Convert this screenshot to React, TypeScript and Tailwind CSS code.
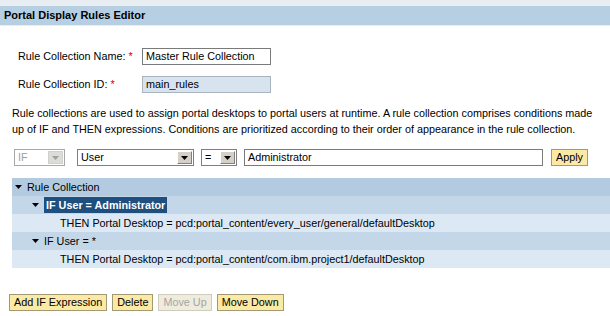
import React from "react";

function Arrow({ color = "#000" }: { color?: string }) {
  return (
    <svg width="7" height="4" viewBox="0 0 7 4">
      <path d="M0 0 L7 0 L3.5 4 Z" fill={color} />
    </svg>
  );
}

function Select({ value, width, disabled }: { value: string; width: string; disabled?: boolean }) {
  return (
    <div
      className={`flex h-[17px] items-stretch border ${disabled ? "border-[#a8a8a8]" : "border-[#7f7f7f]"} bg-white ${width}`}
    >
      <div className={`flex-1 pl-[3px] leading-[15px] ${disabled ? "text-[#a0a0a0]" : "text-black"}`}>{value}</div>
      <div
        className={`m-[1px] flex w-[15px] items-center justify-center border ${disabled ? "border-[#d0d0d0] bg-[#dcdcd8]" : "border-t-white border-l-white border-r-[#808080] border-b-[#808080] bg-[#d4d0c8]"}`}
      >
        <Arrow color={disabled ? "#a0a0a0" : "#000"} />
      </div>
    </div>
  );
}

function YellowButton({ label, disabled }: { label: string; disabled?: boolean }) {
  return (
    <div
      className={`h-[17px] border px-[4px] leading-[15px] ${disabled ? "border-[#cfcbbd] bg-[#efebdd] text-[#a5a5a5]" : "border-[#a39a72] bg-[#fbe9a6] text-black"}`}
    >
      {label}
    </div>
  );
}

function TreeRow({ bg, indent, arrow, children }: { bg: string; indent: string; arrow?: boolean; children: React.ReactNode }) {
  return (
    <div className={`flex h-[18px] items-center ${bg} ${indent}`}>
      {arrow && (
        <span className="mr-[4px] flex w-[8px] items-center">
          <Arrow />
        </span>
      )}
      {children}
    </div>
  );
}

export default function App() {
  return (
    <div className="h-[316px] w-[610px] overflow-hidden bg-white text-[10.8px] text-black [font-family:'Liberation_Sans',Arial,sans-serif]">
      <div className="h-[6px] bg-[#e9eef3]" />
      <div className="flex h-[20px] items-center border-b border-b-[#e4edf5] bg-[#b7cfe3] pl-[4px] text-[11px] font-bold">
        Portal Display Rules Editor
      </div>

      <div className="flex flex-col gap-[11px] pl-[18px] pt-[22px]">
        <div className="flex items-center">
          <div className="w-[124px]">
            Rule Collection Name: <span className="text-[#d00000]">*</span>
          </div>
          <div className="h-[17px] w-[129px] border border-[#7a7a7a] bg-white pl-[3px] leading-[15px]">Master Rule Collection</div>
        </div>
        <div className="flex items-center">
          <div className="w-[124px]">
            Rule Collection ID: <span className="text-[#d00000]">*</span>
          </div>
          <div className="h-[17px] w-[129px] border border-[#a9b4be] bg-[#d7e3ef] pl-[3px] leading-[15px]">main_rules</div>
        </div>
      </div>

      <p className="mt-[12px] pl-[12px] pr-[8px] leading-[16px]">
        Rule collections are used to assign portal desktops to portal users at runtime. A rule collection comprises conditions made up of IF and THEN expressions. Conditions are prioritized according to their order of appearance in the rule collection.
      </p>

      <div className="mt-[12px] flex items-center pl-[14px]">
        <Select value="IF" width="w-[51px]" disabled />
        <div className="w-[12px]" />
        <Select value="User" width="w-[117px]" />
        <div className="w-[7px]" />
        <Select value="=" width="w-[36px]" />
        <div className="w-[7px]" />
        <div className="h-[17px] w-[299px] border border-[#7a7a7a] bg-white pl-[3px] leading-[15px]">Administrator</div>
        <div className="w-[8px]" />
        <YellowButton label="Apply" />
      </div>

      <div className="ml-[12px] mt-[12px] flex flex-col">
        <TreeRow bg="bg-[#b3cbe0]" indent="pl-[3px]" arrow>
          Rule Collection
        </TreeRow>
        <TreeRow bg="bg-[#c4d7e8]" indent="pl-[20px]" arrow>
          <span className="bg-[#1e4f7f] px-[2px] font-bold leading-[16px] text-white">IF User = Administrator</span>
        </TreeRow>
        <TreeRow bg="bg-[#dce8f3]" indent="pl-[48px]">
          THEN Portal Desktop = pcd:portal_content/every_user/general/defaultDesktop
        </TreeRow>
        <TreeRow bg="bg-[#c4d7e8]" indent="pl-[20px]" arrow>
          IF User = *
        </TreeRow>
        <TreeRow bg="bg-[#dce8f3]" indent="pl-[48px]">
          THEN Portal Desktop = pcd:portal_content/com.ibm.project1/defaultDesktop
        </TreeRow>
      </div>

      <div className="mt-[26px] flex gap-[5px] pl-[9px]">
        <YellowButton label="Add IF Expression" />
        <YellowButton label="Delete" />
        <YellowButton label="Move Up" disabled />
        <YellowButton label="Move Down" />
      </div>
    </div>
  );
}
